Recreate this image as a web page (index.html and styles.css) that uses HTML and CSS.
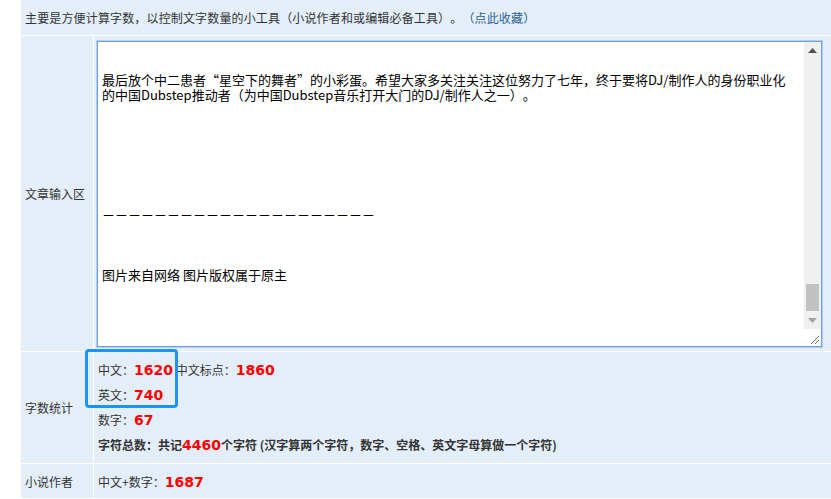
FILE: index.html
```html
<!DOCTYPE html>
<html lang="zh-cn">
<head>
    <meta charset="UTF-8">
    <title>字数统计</title>
    <link rel="stylesheet" href="styles.css">
</head>
<body>
    <div class="tool">
        <div class="intro">主要是方便计算字数，以控制文字数量的小工具（小说作者和或编辑必备工具）。<a class="fav" href="#">（点此收藏）</a></div>

        <div class="label">文章输入区</div>
        <div class="cell input-cell">
            <div class="editor">
                <textarea class="content" spellcheck="false">


最后放个中二患者“星空下的舞者”的小彩蛋。希望大家多关注关注这位努力了七年，终于要将DJ/制作人的身份职业化
的中国Dubstep推动者（为中国Dubstep音乐打开大门的DJ/制作人之一）。







－－－－－－－－－－－－－－－－－－－－－



图片来自网络 图片版权属于原主</textarea>
                <div class="scrollbar">
                    <div class="arrow">
                        <svg width="9" height="5" viewBox="0 0 9 5"><path d="M0 5 L4.5 0 L9 5 Z" fill="#505050"/></svg>
                    </div>
                    <div class="track">
                        <div class="thumb"></div>
                    </div>
                    <div class="arrow">
                        <svg width="9" height="5" viewBox="0 0 9 5"><path d="M0 0 L9 0 L4.5 5 Z" fill="#a3a3a3"/></svg>
                    </div>
                    <div class="grip">
                        <svg width="17" height="17" viewBox="0 0 17 17">
                            <path d="M15 7 L7 15 M15 11 L11 15" stroke="#6d6d6d" stroke-width="1"/>
                        </svg>
                    </div>
                </div>
            </div>
        </div>

        <div class="label">字数统计</div>
        <div class="cell stats">
            <div class="mark"></div>
            <div class="line">中文：<span class="num">1620</span> 中文标点：<span class="num">1860</span></div>
            <div class="line">英文：<span class="num">740</span></div>
            <div class="line">数字：<span class="num">67</span></div>
            <div class="line total">字符总数：共记<span class="num">4460</span>个字符 (汉字算两个字符，数字、空格、英文字母算做一个字符)</div>
        </div>

        <div class="label">小说作者</div>
        <div class="cell stats">
            <div class="line">中文+数字：<span class="num">1687</span></div>
        </div>
    </div>
</body>
</html>
```

FILE: styles.css
```css
body {
    margin: 0;
    background-color: #fff;
    font-family: "Noto Sans CJK SC", "Noto Sans", sans-serif;
    font-size: 12px;
    color: #333;
    text-spacing-trim: space-all;
}
.tool {
    margin-left: 21px;
    display: grid;
    grid-template-columns: 72px 1fr;
    grid-template-rows: 35px 315px 111px 34px;
    gap: 1px;
}
.intro {
    grid-column: 1 / 3;
    background-color: #e4eef9;
    padding-left: 4px;
    display: flex;
    align-items: center;
    letter-spacing: 0.15px;
}
.fav {
    color: #2a5f96;
    text-decoration: none;
}
.label {
    background-color: #e4eef9;
    padding-left: 4px;
    display: flex;
    align-items: center;
}
.cell {
    background-color: #e4eef9;
}
.input-cell {
    padding: 5px 9px 4px 3px;
}
.editor {
    display: flex;
    height: 304px;
    border: 1px solid #6a9fe3;
    box-shadow: 0 0 0 1px #b4cff1;
    background-color: #fff;
}
.content {
    flex: 1;
    border: none;
    outline: none;
    resize: none;
    overflow: hidden;
    margin: 0;
    padding: 0 4px;
    font-family: "Noto Sans CJK SC", sans-serif;
    font-size: 13px;
    line-height: 15px;
    color: #000;
    text-spacing-trim: space-all;
}
.scrollbar {
    width: 17px;
    display: flex;
    flex-direction: column;
    background-color: #f0f0f0;
}
.arrow {
    height: 17px;
    display: flex;
    align-items: center;
    justify-content: center;
}
.track {
    flex: 1;
    display: flex;
    flex-direction: column;
    justify-content: flex-end;
    padding: 0 2px 1px 2px;
}
.thumb {
    height: 27px;
    background-color: #c1c1c1;
}
.grip {
    height: 17px;
    background-color: #fff;
}
.grip svg {
    display: block;
}
.stats {
    position: relative;
    padding: 5px 4px 0 4px;
}
.line {
    height: 25px;
    display: flex;
    align-items: center;
    white-space: pre;
}
.total {
    font-weight: bold;
}
.num {
    font-family: "DejaVu Sans", sans-serif;
    font-weight: bold;
    font-size: 14px;
    color: #ff0000;
}
/* 标注框 */
.mark {
    position: absolute;
    left: -9px;
    top: -3px;
    width: 87px;
    height: 53px;
    border: 3px solid #1e94f2;
    border-radius: 4px;
}
```
